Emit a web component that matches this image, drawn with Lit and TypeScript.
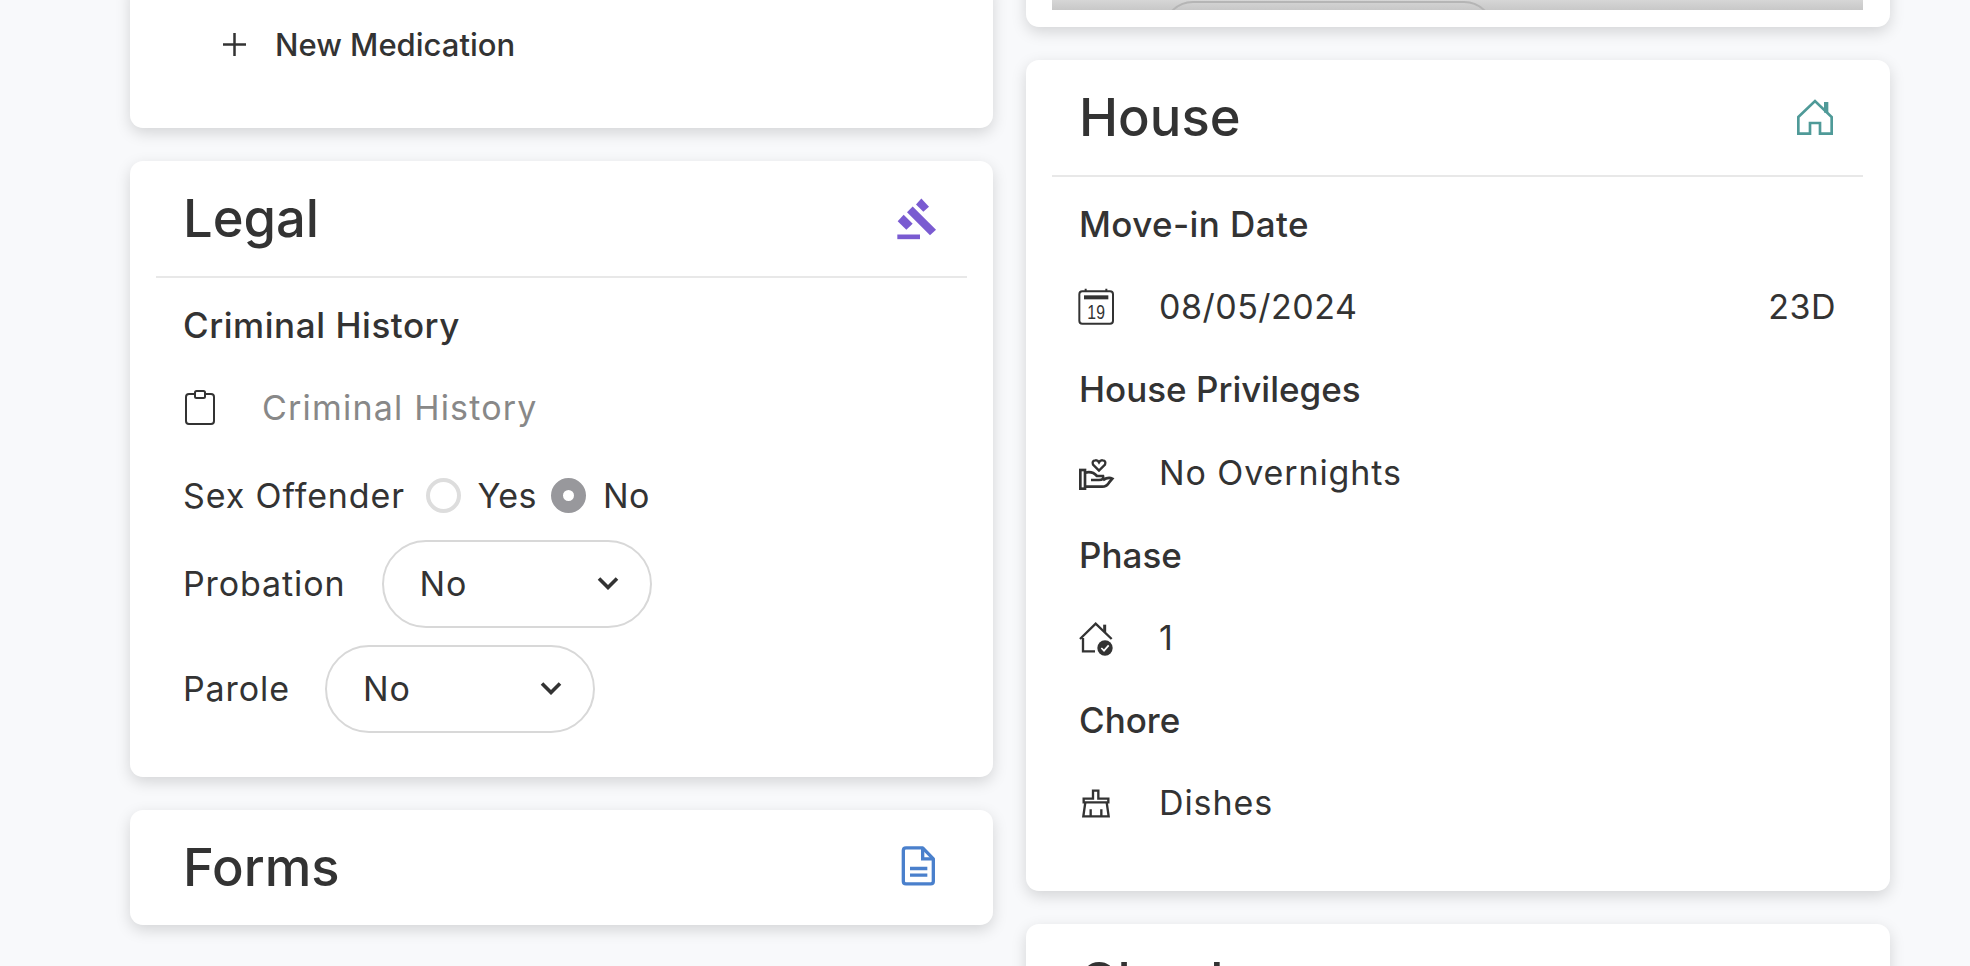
import { LitElement, html, css, svg } from "lit";
import { customElement } from "lit/decorators.js";

const icons = {
  gavel: svg`<svg class="head-ic" width="60" height="50" viewBox="0 10.5 180 150" fill="#7a5bd1"><path d="M108 42 124 24 147 49 130 64Z"/><path d="M81 65 98 48 168 118 150 134Z"/><path d="M53 92 71 73 98 100 79 118Z"/><rect x="52" y="132" width="68" height="14"/></svg>`,
  home: svg`<svg class="head-ic" width="60" height="50" viewBox="0 6 180 150" fill="none" stroke="#4f9a98" stroke-width="8"><path d="M55 78 105 30 155 78V128H120V96H90V128H55Z"/><path d="M132 33h13v32h-13z" fill="#4f9a98" stroke="none"/></svg>`,
  file: svg`<svg class="head-ic" width="50" height="50" viewBox="0 7.5 150 150" fill="none" stroke="#4a80cc" stroke-width="10"><path d="M98 22H48Q40 22 40 30V122Q40 130 48 130H122Q130 130 130 122V55Z" stroke-linejoin="round"/><path d="M98 22V55H130" /><path d="M60 84H112M60 104H112"/></svg>`,
  clip: svg`<svg class="ic" width="40" height="50" viewBox="0 0 40 50" fill="none" stroke="#333" stroke-width="2"><path d="M11 12H6Q3 12 3 15V39Q3 42 6 42H28Q31 42 31 39V15Q31 12 28 12H23"/><rect x="12" y="9" width="10" height="7" rx="1.5"/></svg>`,
  cal: svg`<svg class="ic" width="40" height="50" viewBox="30 5 120 150" fill="none" stroke="#333" stroke-width="6"><rect x="31" y="33" width="101" height="97" rx="9"/><path d="M50 25v8M112 25v8"/><rect x="45" y="45" width="73" height="12" fill="#333" stroke="none"/><text class="cal-num" x="55" y="115" textLength="54" lengthAdjust="spacingAndGlyphs" fill="#333" stroke="none">19</text></svg>`,
  hand: svg`<svg class="ic" width="40" height="50" viewBox="30 -9 120 150" fill="none" stroke="#333" stroke-width="8"><path d="M90 62 72 44Q68 32 79 31 86 30 90 37 94 30 101 31 112 32 108 44Z" stroke-width="7"/><rect x="34" y="60" width="14" height="56"/><path d="M48 68Q70 62 84 78H102Q106 90 90 90H66M48 110H100Q112 110 120 98L130 86Q118 80 102 90"/></svg>`,
  phase: svg`<svg class="ic" width="40" height="50" viewBox="30 0 120 150" fill="none" stroke="#333" stroke-width="7"><path d="M33 81 80 35 128 81"/><path d="M107 38V60" stroke-width="9"/><path d="M42 78V118H78"/><circle cx="108" cy="108" r="23" fill="#333" stroke="none"/><path d="M97 108 105 116 119 100" stroke="#fff" stroke-width="5"/></svg>`,
  brush: svg`<svg class="ic" width="40" height="50" viewBox="30 0 120 150" fill="none" stroke="#333" stroke-width="7"><path d="M72 62V38H88V62H118V73H44V62Z"/><path d="M49 73 43 115H119L113 73"/><path d="M65 94V115M97 94V115"/></svg>`,
};

const chev = svg`<svg width="22" height="14" viewBox="0 0 22 14" fill="none" stroke="#333" stroke-width="3.6"><path d="M2 2.5 11 11.5 20 2.5"/></svg>`;

@customElement("app-root")
export class AppRoot extends LitElement {
  static styles = css`
    :host { display: block; height: 966px; overflow: hidden; background: #f8f9fb; color: #333;
      font-family: Inter, "Liberation Sans", sans-serif; }
    .page { display: grid; grid-template-columns: 863px 864px; column-gap: 33px; padding-left: 130px; align-items: start; }
    .col { display: flex; flex-direction: column; gap: 33px; }
    .card { background: #fff; border-radius: 13px; box-shadow: 0 5px 15px rgba(0,0,0,.15); }
    .top-left { margin-top: -20px; padding: 39px 0 59px 93px; }
    .add { display: flex; align-items: center; height: 50px; gap: 29px; font-size: 31px; font-weight: 500; }
    .top-right { margin-top: -30px; padding: 0 27px 17px 26px; }
    .map { position: relative; height: 40px; overflow: hidden; background: linear-gradient(#d6d6d6 75%, #c8c8c8 100%); }
    .pill { position: absolute; left: 111px; top: 31px; width: 331px; height: 60px; box-sizing: border-box; border: 2px solid #b5b5b5; border-radius: 30px; }
    .head { display: flex; align-items: center; justify-content: space-between; height: 115px; padding: 0 53px; }
    .head.house { padding-right: 50px; }
    .title { font-size: 52.5px; font-weight: 500; margin-bottom: 2px; }
    .head-ic, .ic { flex: none; overflow: visible; }
    .rule { height: 2px; margin: 0 26px; background: #e8e8e8; }
    .rule.right { margin-right: 27px; }
    .body { display: flex; flex-direction: column; gap: 32.7px; padding: 22px 54px 63.6px 53px; }
    .legal { padding: 22px 53px 44px; gap: 0; }
    .label { height: 50px; line-height: 50px; font-size: 35px; font-weight: 500; }
    .label.wide { letter-spacing: .55px; }
    .label.mid { letter-spacing: .4px; }
    .row { display: flex; align-items: center; height: 50px; font-size: 34px; letter-spacing: .9px; }
    .ic { margin-right: 40px; }
    .clip-row .ic { margin-right: 39px; }
    .val { flex: 1; }
    .ph { color: #888; letter-spacing: 1.2px; }
    .num { letter-spacing: .5px; }
    .cal-num { font-size: 60px; font-family: "Liberation Sans", sans-serif; }
    .gap { margin-top: 32px; }
    .sex { margin-top: 38px; }
    .radio { box-sizing: border-box; width: 35px; height: 35px; border-radius: 50%; border: 4px solid #ddd; flex: none; }
    .radio.on { border: 12px solid #98989c; background: #fff; }
    .sex-label { margin-right: 21px; }
    .opt { margin: 0 14.5px 0 16.5px; letter-spacing: .4px; }
    .sel-row { display: flex; align-items: center; gap: 36px; font-size: 34px; letter-spacing: .9px; margin-top: 17px; }
    .sel-row.first { margin-top: 20px; }
    .sel-row.short { gap: 35px; }
    .sel-row > span { margin-bottom: 2px; }
    .sel { box-sizing: border-box; width: 270px; height: 88px; border: 2px solid #d8d8d8; border-radius: 44px; display: flex; align-items: center; justify-content: space-between; padding: 0 31px 2px 36px; }
    .cut { height: 60px; }
  `;

  render() {
    return html`<div class="page">
      <div class="col">
        <section class="card top-left">
          <div class="add">
            <svg width="23" height="23" viewBox="0 0 23 23" stroke="#333" stroke-width="2.5"><path d="M11.5 0V23M0 11.5H23"/></svg>
            <span>New Medication</span>
          </div>
        </section>
        <section class="card">
          <div class="head"><span class="title">Legal</span>${icons.gavel}</div>
          <div class="rule"></div>
          <div class="body legal">
            <div class="label wide">Criminal History</div>
            <div class="row gap clip-row">${icons.clip}<span class="val ph">Criminal History</span></div>
            <div class="row sex">
              <span class="sex-label">Sex Offender</span><span class="radio"></span><span class="opt">Yes</span><span class="radio on"></span><span class="opt">No</span>
            </div>
            <div class="sel-row first"><span>Probation</span><div class="sel"><span>No</span>${chev}</div></div>
            <div class="sel-row short"><span>Parole</span><div class="sel"><span>No</span>${chev}</div></div>
          </div>
        </section>
        <section class="card"><div class="head"><span class="title">Forms</span>${icons.file}</div></section>
      </div>
      <div class="col">
        <section class="card top-right"><div class="map"><div class="pill"></div></div></section>
        <section class="card">
          <div class="head house"><span class="title">House</span>${icons.home}</div>
          <div class="rule right"></div>
          <div class="body">
            <div class="label mid">Move-in Date</div>
            <div class="row">${icons.cal}<span class="val num">08/05/2024</span><span class="num">23D</span></div>
            <div class="label">House Privileges</div>
            <div class="row">${icons.hand}<span class="val">No Overnights</span></div>
            <div class="label">Phase</div>
            <div class="row">${icons.phase}<span class="val">1</span></div>
            <div class="label">Chore</div>
            <div class="row">${icons.brush}<span class="val">Dishes</span></div>
          </div>
        </section>
        <section class="card cut"><div class="head"><span class="title">Check</span></div></section>
      </div>
    </div>`;
  }
}
